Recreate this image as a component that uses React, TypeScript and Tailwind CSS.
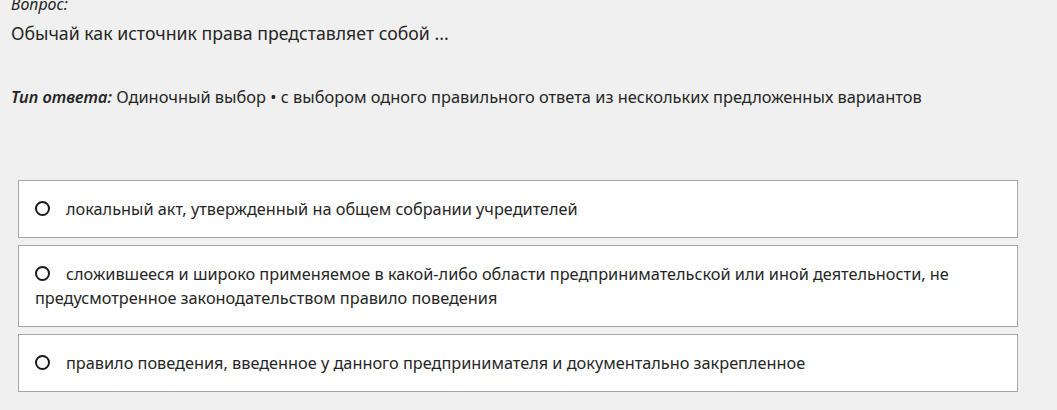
const answers = [
  'локальный акт, утвержденный на общем собрании учредителей',
  'сложившееся и широко применяемое в какой-либо области предпринимательской или иной деятельности, не предусмотренное законодательством правило поведения',
  'правило поведения, введенное у данного предпринимателя и документально закрепленное',
];

export default function App() {
  return (
    <div className="min-h-screen overflow-hidden bg-[#f0f0f0] font-['Noto_Sans',sans-serif] text-[#262626]">
      <div className="px-[11px]">
        <p className="-mt-[6px] text-[16px] leading-[20px] italic">Вопрос:</p>
        <p className="mt-[6px] text-[17.7px] leading-[26px]">Обычай как источник права представляет собой ...</p>
        <p className="mt-[39px] text-[16.4px] leading-[24px]">
          <span className="font-semibold italic">Тип ответа:</span> Одиночный выбор • с выбором одного правильного ответа из нескольких предложенных вариантов
        </p>
      </div>
      <div className="mt-[71px] ml-[18px] flex w-[1000px] flex-col gap-[7px]">
        {answers.map((a) => (
          <label
            key={a}
            className="block cursor-pointer border border-[#a6a6a6] bg-white px-4 py-4 text-[16.3px] leading-[24px]"
          >
            <span className="mr-[16px] inline-block h-[15px] w-[15px] rounded-full border-2 border-[#1a1a1a] align-[-1px]" />
            {a}
          </label>
        ))}
      </div>
    </div>
  );
}
